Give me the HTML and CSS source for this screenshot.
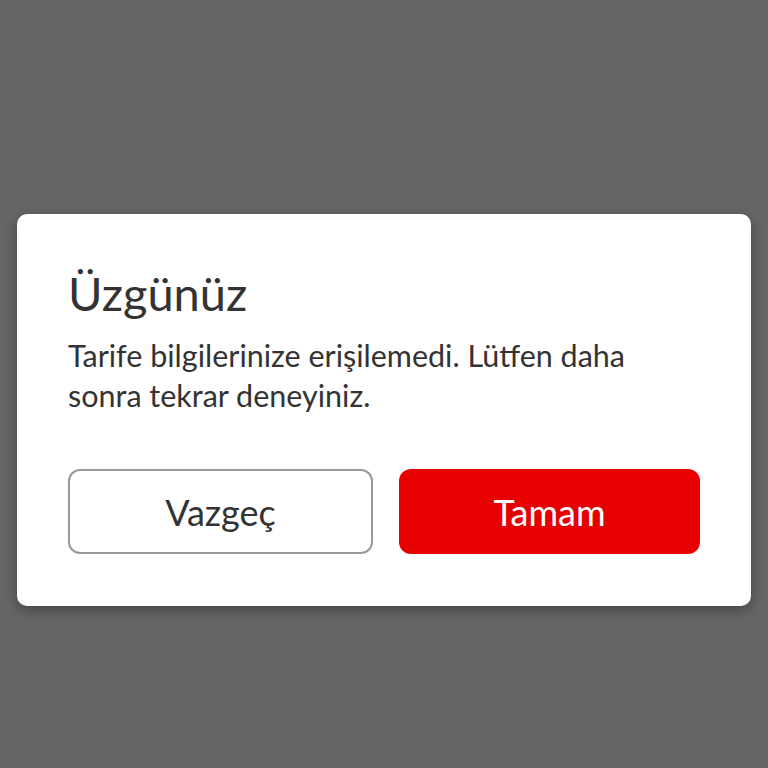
FILE: index.html
```html
<!DOCTYPE html>
<html lang="tr">
<head>
    <meta charset="UTF-8">
    <meta name="viewport" content="width=device-width, initial-scale=1.0">
    <title>Üzgünüz</title>
    <link rel="stylesheet" href="styles.css">
</head>
<body>
    <div class="dialog">
        <h1 class="dialog-title">Üzgünüz</h1>
        <p class="dialog-text">Tarife bilgilerinize erişilemedi. Lütfen daha sonra tekrar deneyiniz.</p>
        <div class="dialog-actions">
            <button type="button" class="btn btn-secondary">Vazgeç</button>
            <button type="button" class="btn btn-primary">Tamam</button>
        </div>
    </div>
</body>
</html>
```

FILE: styles.css
```css
body {
    margin: 0;
    padding: 214px 17px 0;
    font-family: Lato, "Open Sans", sans-serif;
    background-color: #666666;
    height: 768px;
    box-sizing: border-box;
}

.dialog {
    background-color: #fff;
    border-radius: 10px;
    box-shadow: 0 4px 14px rgba(0, 0, 0, 0.35);
    padding: 51px 51px 52px;
    color: #333;
}

.dialog-title {
    margin: 0;
    font-size: 47px;
    font-weight: 400;
    line-height: 56px;
}

.dialog-text {
    margin: 14px 0 0;
    font-size: 30.5px;
    line-height: 40px;
}

.dialog-actions {
    display: flex;
    gap: 26px;
    margin-top: 54px;
}

.btn {
    flex: 1;
    height: 85px;
    border-radius: 12px;
    font-family: inherit;
    font-size: 36px;
    cursor: pointer;
}

.btn-secondary {
    background-color: #fff;
    border: 2px solid #999;
    color: #333;
}

.btn-primary {
    background-color: #e60000;
    border: none;
    color: #fff;
}
```
